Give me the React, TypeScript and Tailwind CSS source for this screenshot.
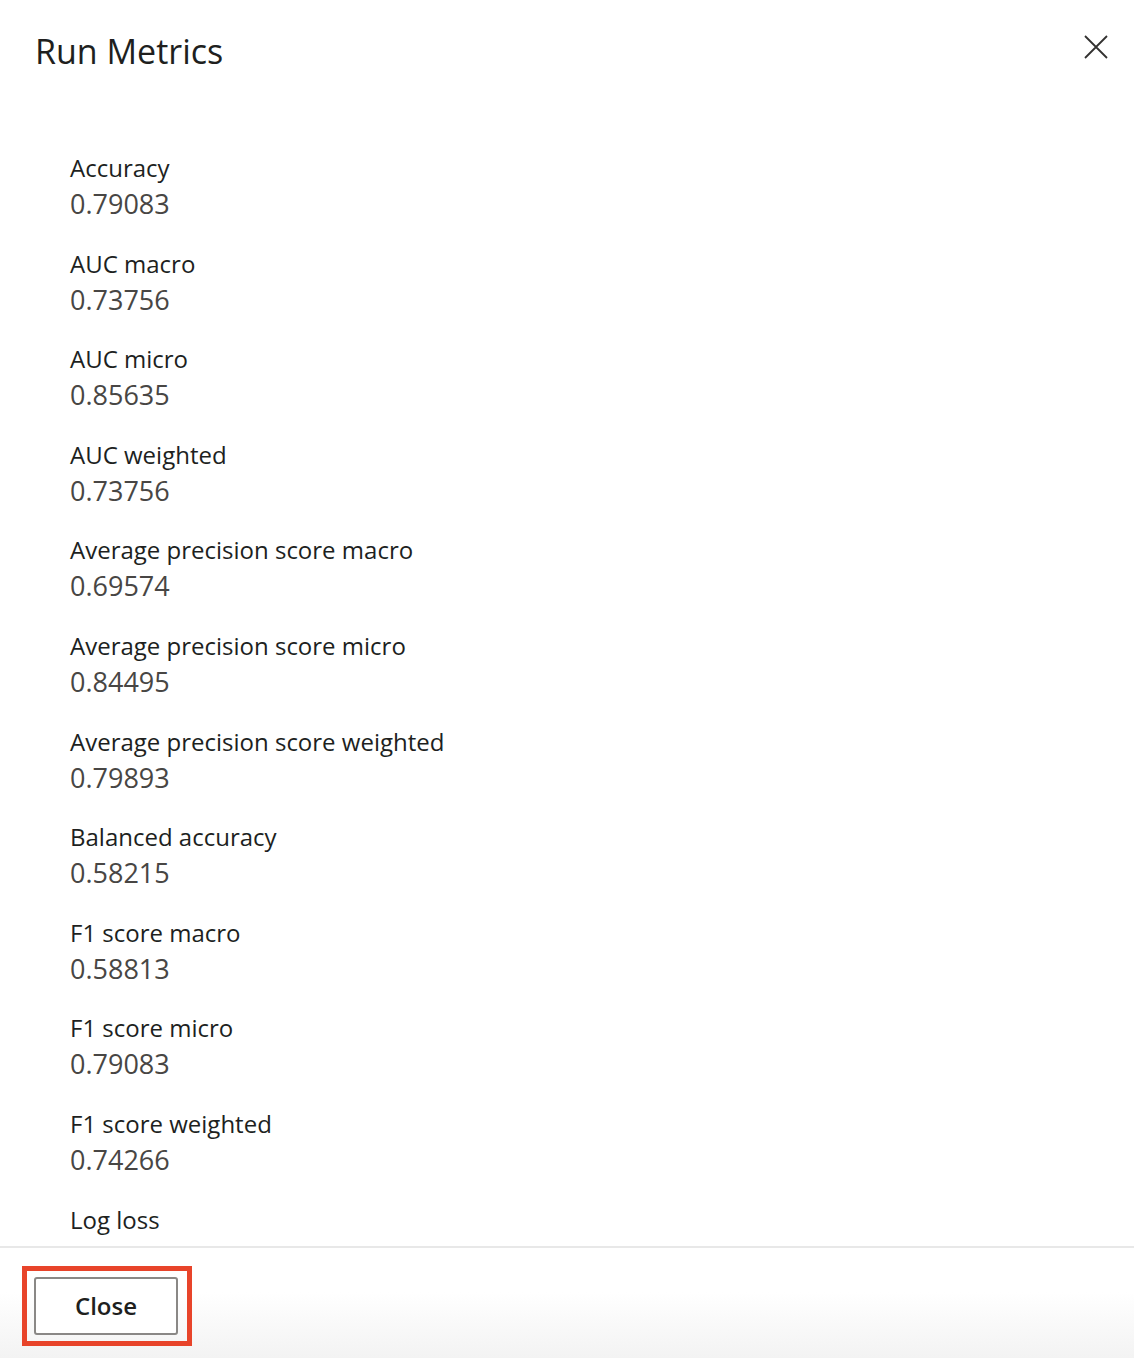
const metrics = [
  { label: "Accuracy", value: "0.79083" },
  { label: "AUC macro", value: "0.73756" },
  { label: "AUC micro", value: "0.85635" },
  { label: "AUC weighted", value: "0.73756" },
  { label: "Average precision score macro", value: "0.69574" },
  { label: "Average precision score micro", value: "0.84495" },
  { label: "Average precision score weighted", value: "0.79893" },
  { label: "Balanced accuracy", value: "0.58215" },
  { label: "F1 score macro", value: "0.58813" },
  { label: "F1 score micro", value: "0.79083" },
  { label: "F1 score weighted", value: "0.74266" },
  { label: "Log loss", value: "0.48120" },
]

export default function App() {
  return (
    <div
      className="flex h-[1358px] w-full flex-col bg-white text-[#201f1e]"
      style={{ fontFamily: '"Open Sans", "Noto Sans", sans-serif' }}
    >
      {/* Header */}
      <div className="flex items-start justify-between pl-[35px] pr-[26px] pt-[29px]">
        <h1 className="text-[34px] leading-[44px]">Run Metrics</h1>
        <button className="mt-[6px] text-[#323130]">
          <svg width="24" height="24" viewBox="0 0 24 24" fill="none" stroke="currentColor" strokeWidth="1.8">
            <path d="M1 1L23 23M23 1L1 23" />
          </svg>
        </button>
      </div>

      {/* Metric list */}
      <div className="flex-1 overflow-hidden pl-[70px] pt-[77px]">
        <div className="flex flex-col gap-[23.6px]">
          {metrics.map((m) => (
            <div key={m.label} className="flex flex-col">
              <span className="text-[24px] leading-[36px]">{m.label}</span>
              <span className="text-[27px] leading-[36px] text-[#484644]">{m.value}</span>
            </div>
          ))}
        </div>
      </div>

      {/* Footer */}
      <div className="h-[112px] border-t-2 border-[#e8e8e8] bg-gradient-to-b from-white from-40% to-[#f3f3f3] pl-[22px] pt-[18px]">
        <div className="inline-flex border-[5px] border-[#e8442a] py-[6px] pl-[7px] pr-[9px]">
          <button className="h-[58px] w-[144px] rounded-[3px] border-2 border-[#8a8886] bg-white text-[24px] font-semibold">
            Close
          </button>
        </div>
      </div>
    </div>
  )
}
